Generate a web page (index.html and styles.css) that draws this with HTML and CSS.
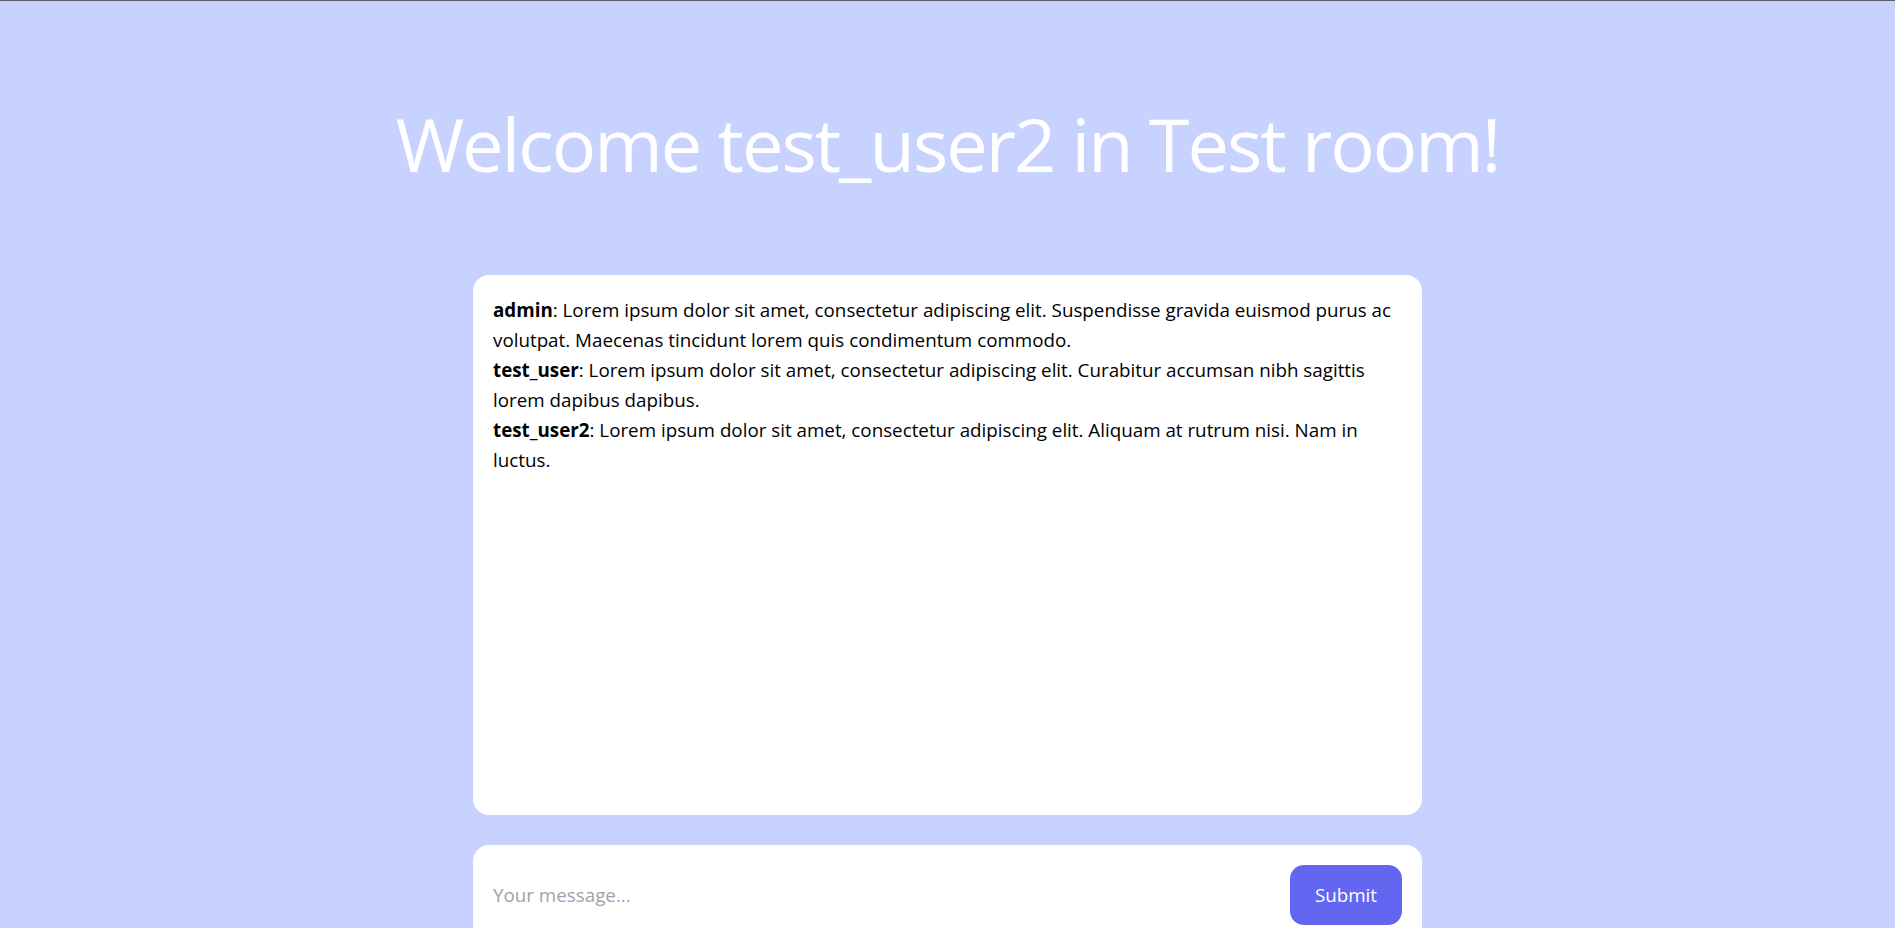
FILE: index.html
```html
<!DOCTYPE html>
<html lang="en">
<head>
<meta charset="utf-8">
<title>Chat room</title>
<link rel="stylesheet" href="styles.css">
</head>
<body>
<main class="page">
  <h1 class="title">Welcome test_user2 in Test room!</h1>
  <section class="chat">
    <p class="msg"><b>admin</b>: Lorem ipsum dolor sit amet, consectetur adipiscing elit. Suspendisse gravida euismod purus ac volutpat. Maecenas tincidunt lorem quis condimentum commodo.</p>
    <p class="msg"><b>test_user</b>: Lorem ipsum dolor sit amet, consectetur adipiscing elit. Curabitur accumsan nibh sagittis lorem dapibus dapibus.</p>
    <p class="msg"><b>test_user2</b>: Lorem ipsum dolor sit amet, consectetur adipiscing elit. Aliquam at rutrum nisi. Nam in luctus.</p>
  </section>
  <form class="composer">
    <input class="composer-input" type="text" placeholder="Your message...">
    <button class="composer-btn" type="button">Submit</button>
  </form>
</main>
</body>
</html>
```
FILE: styles.css
```css
html, body {
  margin: 0;
  padding: 0;
}
body {
  background: #c7d2fe;
  border-top: 1px solid #5f5f66;
  font-family: "Open Sans", "Noto Sans", sans-serif;
  color: #000;
}
.page {
  display: flex;
  flex-direction: column;
  align-items: center;
  padding-bottom: 40px;
}
.title {
  margin: 106px 0 94px;
  font-size: 74px;
  letter-spacing: -2px;
  line-height: 1;
  font-weight: 400;
  color: #fff;
  white-space: nowrap;
}
.chat {
  box-sizing: border-box;
  width: 949px;
  max-width: 100%;
  height: 540px;
  background: #fff;
  border-radius: 16px;
  padding: 20px;
  font-size: 18.8px;
  line-height: 30px;
}
.msg {
  margin: 0;
}
.msg b {
  font-weight: 700;
}
.composer {
  box-sizing: border-box;
  width: 949px;
  max-width: 100%;
  margin-top: 30px;
  background: #fff;
  border-radius: 16px;
  padding: 20px;
  display: flex;
  align-items: center;
  gap: 20px;
}
.composer-input {
  flex: 1;
  border: none;
  outline: none;
  font: inherit;
  font-size: 18.8px;
  color: #000;
  padding: 0;
  background: transparent;
}
.composer-input::placeholder {
  color: #9ca3af;
}
.composer-btn {
  border: none;
  background: #6366f1;
  color: #fff;
  font: inherit;
  font-size: 18.8px;
  line-height: 28px;
  padding: 16px 24px;
  border-radius: 14px;
  width: 112px;
}
```
